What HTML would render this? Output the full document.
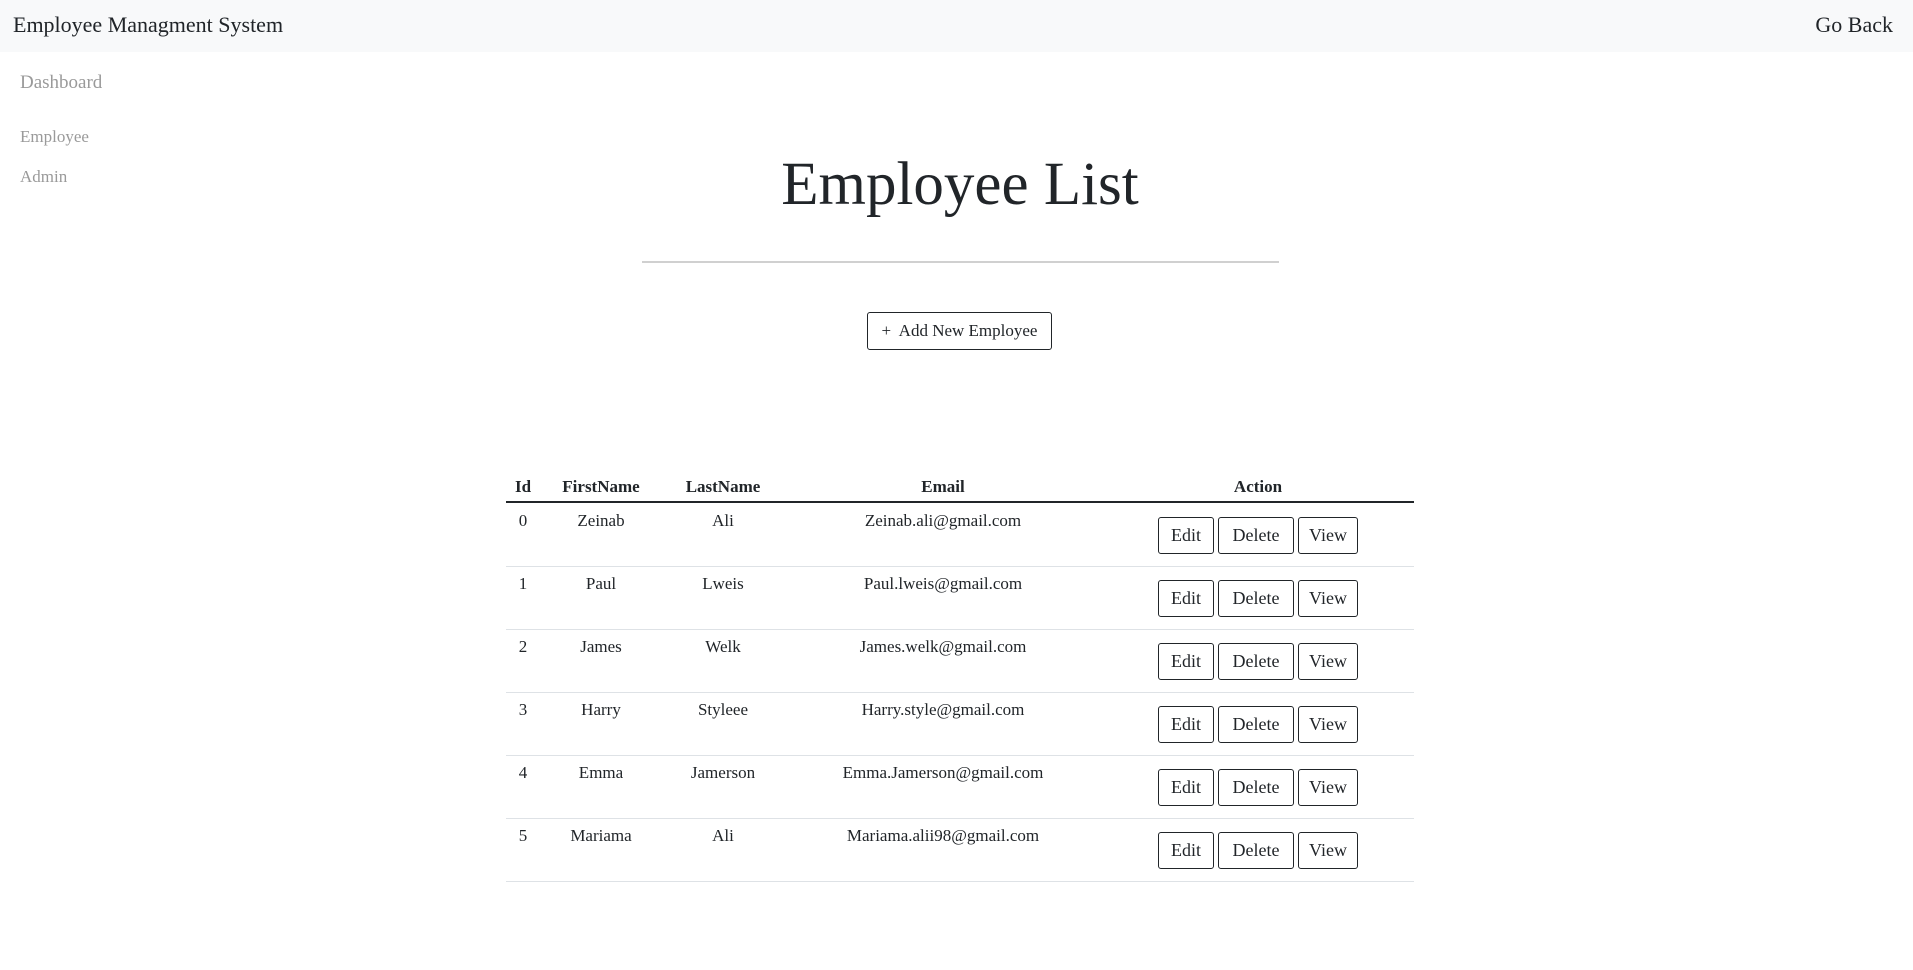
<!DOCTYPE html>
<html><head><meta charset="utf-8"><style>
*{margin:0;padding:0;box-sizing:border-box}
body{width:1913px;height:970px;background:#fff;font-family:"Liberation Serif",serif;color:#212529;position:relative;overflow:hidden}
.nav{position:absolute;left:0;top:0;width:1913px;height:52px;background:#f8f9fa}
.abs{position:absolute;white-space:nowrap}
.side{color:#9a9a9a}
.btn{position:absolute;border:1px solid #212529;border-radius:3px;background:#fff;font-size:18px;color:#212529;display:flex;align-items:center;justify-content:center}
.c{position:absolute;transform:translateX(-50%);white-space:nowrap;font-size:17px}
.h{font-weight:bold;font-size:17px}
.line{position:absolute;left:506px;width:908px;height:1px;background:#dee2e6}
</style></head><body>
<div class="nav"></div>
<div class="abs" style="left:13px;top:12px;font-size:22px">Employee Managment System</div>
<div class="abs" style="right:20px;top:12px;font-size:22px">Go Back</div>
<div class="abs side" style="left:20px;top:72px;font-size:19px">Dashboard</div>
<div class="abs side" style="left:20px;top:127px;font-size:17px">Employee</div>
<div class="abs side" style="left:20px;top:167px;font-size:17px">Admin</div>
<div class="abs" style="left:0;width:1920px;text-align:center;top:150px;font-size:61px">Employee List</div>
<div class="abs" style="left:642px;top:261px;width:637px;height:2px;background:#d0d0d0"></div>
<div class="btn" style="left:867px;top:312px;width:185px;height:38px;font-size:17px">+&nbsp; Add New Employee</div>

<div class="c h" style="left:523px;top:477px">Id</div>
<div class="c h" style="left:601px;top:477px">FirstName</div>
<div class="c h" style="left:723px;top:477px">LastName</div>
<div class="c h" style="left:943px;top:477px">Email</div>
<div class="c h" style="left:1258px;top:477px">Action</div>
<div class="line" style="top:501px;height:2px;background:#212529"></div>

<div class="c" style="left:523px;top:511px">0</div><div class="c" style="left:601px;top:511px">Zeinab</div><div class="c" style="left:723px;top:511px">Ali</div><div class="c" style="left:943px;top:511px">Zeinab.ali@gmail.com</div>
<div class="btn" style="left:1158px;top:517px;width:56px;height:37px">Edit</div><div class="btn" style="left:1218px;top:517px;width:76px;height:37px">Delete</div><div class="btn" style="left:1298px;top:517px;width:60px;height:37px">View</div>
<div class="line" style="top:566px"></div>

<div class="c" style="left:523px;top:574px">1</div><div class="c" style="left:601px;top:574px">Paul</div><div class="c" style="left:723px;top:574px">Lweis</div><div class="c" style="left:943px;top:574px">Paul.lweis@gmail.com</div>
<div class="btn" style="left:1158px;top:580px;width:56px;height:37px">Edit</div><div class="btn" style="left:1218px;top:580px;width:76px;height:37px">Delete</div><div class="btn" style="left:1298px;top:580px;width:60px;height:37px">View</div>
<div class="line" style="top:629px"></div>

<div class="c" style="left:523px;top:637px">2</div><div class="c" style="left:601px;top:637px">James</div><div class="c" style="left:723px;top:637px">Welk</div><div class="c" style="left:943px;top:637px">James.welk@gmail.com</div>
<div class="btn" style="left:1158px;top:643px;width:56px;height:37px">Edit</div><div class="btn" style="left:1218px;top:643px;width:76px;height:37px">Delete</div><div class="btn" style="left:1298px;top:643px;width:60px;height:37px">View</div>
<div class="line" style="top:692px"></div>

<div class="c" style="left:523px;top:700px">3</div><div class="c" style="left:601px;top:700px">Harry</div><div class="c" style="left:723px;top:700px">Styleee</div><div class="c" style="left:943px;top:700px">Harry.style@gmail.com</div>
<div class="btn" style="left:1158px;top:706px;width:56px;height:37px">Edit</div><div class="btn" style="left:1218px;top:706px;width:76px;height:37px">Delete</div><div class="btn" style="left:1298px;top:706px;width:60px;height:37px">View</div>
<div class="line" style="top:755px"></div>

<div class="c" style="left:523px;top:763px">4</div><div class="c" style="left:601px;top:763px">Emma</div><div class="c" style="left:723px;top:763px">Jamerson</div><div class="c" style="left:943px;top:763px">Emma.Jamerson@gmail.com</div>
<div class="btn" style="left:1158px;top:769px;width:56px;height:37px">Edit</div><div class="btn" style="left:1218px;top:769px;width:76px;height:37px">Delete</div><div class="btn" style="left:1298px;top:769px;width:60px;height:37px">View</div>
<div class="line" style="top:818px"></div>

<div class="c" style="left:523px;top:826px">5</div><div class="c" style="left:601px;top:826px">Mariama</div><div class="c" style="left:723px;top:826px">Ali</div><div class="c" style="left:943px;top:826px">Mariama.alii98@gmail.com</div>
<div class="btn" style="left:1158px;top:832px;width:56px;height:37px">Edit</div><div class="btn" style="left:1218px;top:832px;width:76px;height:37px">Delete</div><div class="btn" style="left:1298px;top:832px;width:60px;height:37px">View</div>
<div class="line" style="top:881px"></div>
</body></html>
